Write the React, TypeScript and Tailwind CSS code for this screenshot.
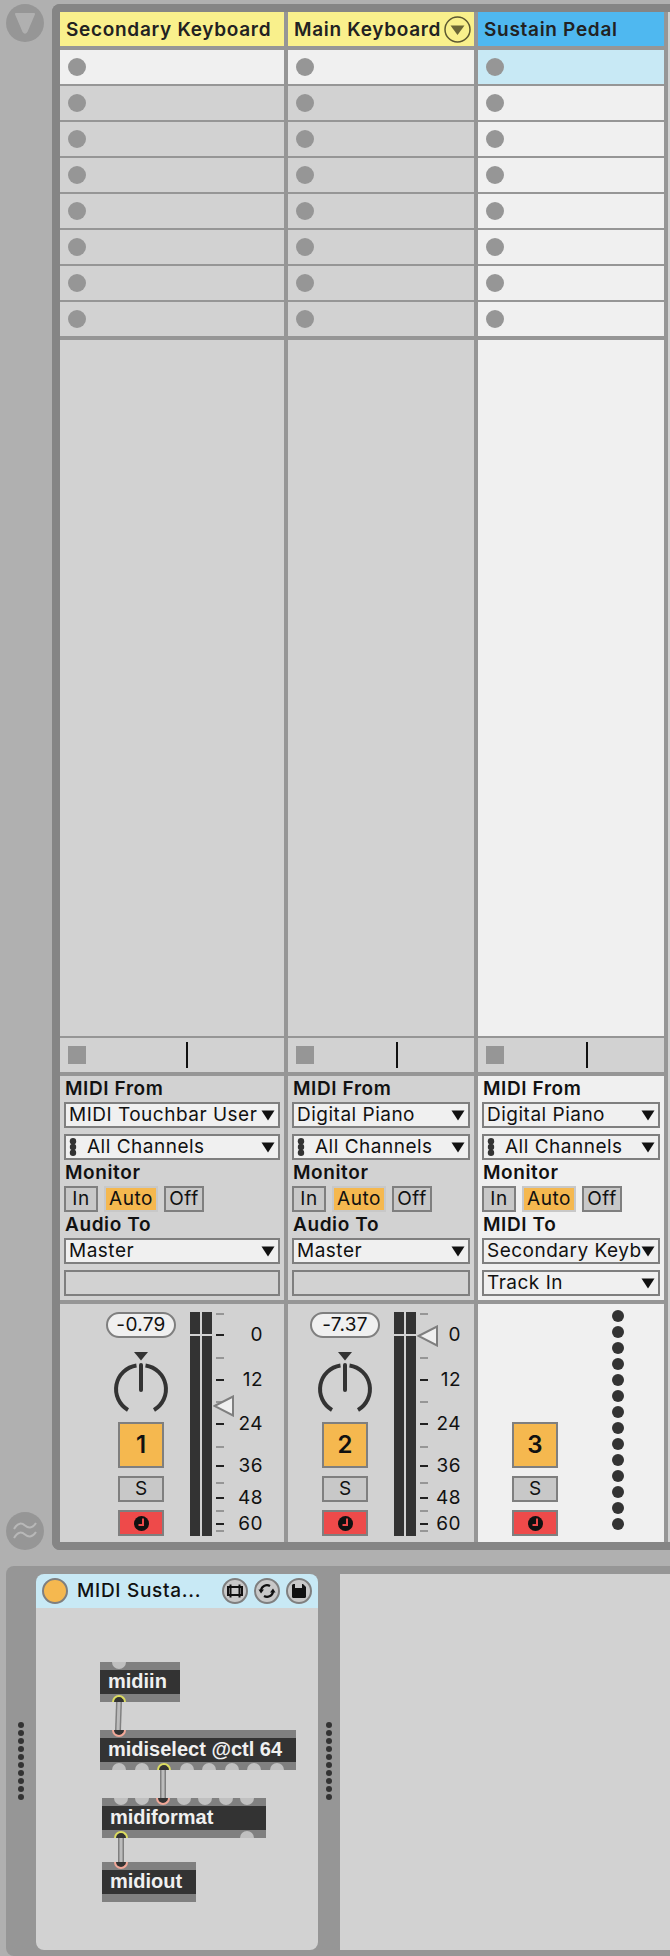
const ticks = [
  { y: 1, major: false },
  { y: 22, major: true, label: "0" },
  { y: 45, major: false },
  { y: 67, major: true, label: "12" },
  { y: 89, major: false },
  { y: 111, major: true, label: "24" },
  { y: 134, major: false },
  { y: 153, major: true, label: "36" },
  { y: 170, major: false },
  { y: 185, major: true, label: "48" },
  { y: 198, major: false },
  { y: 211, major: true, label: "60" },
  { y: 218, major: false },
];

function Arrow() {
  return (
    <svg width="14" height="11" viewBox="0 0 14 11" className="shrink-0">
      <path d="M0.5 0.5H13.5L7 10.5Z" fill="#111" />
    </svg>
  );
}

function Dropdown({ label, channels }: { label: string; channels?: boolean }) {
  return (
    <div className="h-[26px] border-2 border-[#7f7f7f] bg-[#f0f0f0] flex items-center pl-[3px] pr-[3px] text-[19px] tracking-[0.5px] text-[#111]">
      {channels && (
        <svg width="8" height="18" viewBox="0 0 8 18" className="shrink-0 mr-[10px]">
          <circle cx="4" cy="3.2" r="3.2" fill="#333" />
          <circle cx="4" cy="9" r="3.2" fill="#333" />
          <circle cx="4" cy="14.8" r="3.2" fill="#333" />
        </svg>
      )}
      <span className="flex-1 overflow-hidden whitespace-nowrap">{label}</span>
      <Arrow />
    </div>
  );
}

function Label({ children }: { children: string }) {
  return <div className="h-[26px] leading-[26px] pl-px text-[19px] font-semibold tracking-[0.6px] text-[#111]">{children}</div>;
}

function Monitor() {
  return (
    <div className="flex gap-[6px] h-[26px] text-[19px] tracking-[0.5px] text-[#111]">
      <div className="w-[34px] border-2 border-[#7f7f7f] bg-[#c8c8c8] flex items-center justify-center">In</div>
      <div className="w-[54px] border-2 border-[#c8c8c8] bg-[#f5b84f] flex items-center justify-center">Auto</div>
      <div className="w-[40px] border-2 border-[#7f7f7f] bg-[#c8c8c8] flex items-center justify-center">Off</div>
    </div>
  );
}

function Knob() {
  return (
    <svg width="60" height="64" viewBox="0 0 60 64" className="block">
      <path d="M23 0H37L30 8.5Z" fill="#333" />
      <path d="M25.5 13.5A24 24 0 0 0 17 58" fill="none" stroke="#333" strokeWidth="4" />
      <path d="M34.5 13.5A24 24 0 0 1 43 58" fill="none" stroke="#333" strokeWidth="4" />
      <path d="M30 13V38" fill="none" stroke="#333" strokeWidth="4" strokeLinecap="round" />
    </svg>
  );
}

function Fader({ y }: { y: number }) {
  return (
    <svg width="22" height="22" viewBox="0 0 22 22" className="absolute left-[23px]" style={{ top: y }}>
      <path d="M1.5 11L20 1.5V20.5Z" fill="#f0f0f0" stroke="#7f7f7f" strokeWidth="2" />
    </svg>
  );
}

function Meter({ fader, labelRight }: { fader: number; labelRight: number }) {
  return (
    <div className="relative w-[73px] h-[224px] mt-[8px] flex gap-[2px]">
      <div className="w-[10px] h-full bg-[#333] relative">
        <div className="absolute top-[22px] left-0 w-[22px] h-[2px] bg-[#d2d2d2]" />
      </div>
      <div className="w-[10px] h-full bg-[#333]" />
      {ticks.map((t) => (
        <div key={t.y}>
          <div
            className={t.major ? "absolute left-[26px] w-[8px] h-[2px] bg-[#222]" : "absolute left-[26px] w-[8px] h-[2px] bg-[#969696]"}
            style={{ top: t.y }}
          />
          {t.label && (
            <span
              className="absolute text-[19px] leading-[20px] tracking-[0.5px] text-[#111] text-right"
              style={{ top: t.y - 9, right: labelRight }}
            >
              {t.label}
            </span>
          )}
        </div>
      ))}
      <Fader y={fader} />
    </div>
  );
}

function Controls({ value, num }: { value?: string; num: string }) {
  return (
    <div className="w-[70px] h-full flex flex-col items-center pt-[8px]">
      <div className="h-[26px] w-[70px] shrink-0">
        {value && (
          <div className="h-[26px] w-[70px] rounded-full border-2 border-[#7f7f7f] bg-[#f0f0f0] flex items-center justify-center text-[19px] tracking-[0.3px] text-[#111]">
            {value}
          </div>
        )}
      </div>
      <div className="h-[64px] mt-[14px] shrink-0">{value && <Knob />}</div>
      <div className="w-[46px] h-[46px] mt-[6px] shrink-0 border-2 border-[#7f7f7f] bg-[#f5b84f] flex items-center justify-center text-[24px] font-semibold text-[#111]">
        {num}
      </div>
      <div className="w-[46px] h-[26px] mt-[8px] shrink-0 border-2 border-[#7f7f7f] bg-[#c8c8c8] flex items-center justify-center text-[19px] text-[#111]">
        S
      </div>
      <div className="w-[46px] h-[26px] mt-[8px] shrink-0 border-2 border-[#7f7f7f] bg-[#ee4a4a] flex items-center justify-center">
        <svg width="15" height="15" viewBox="0 0 15 15">
          <circle cx="7.5" cy="7.5" r="7.5" fill="#111" />
          <path d="M9 2.5V9H4.5" fill="none" stroke="#ee4a4a" strokeWidth="2" />
        </svg>
      </div>
    </div>
  );
}

type TrackProps = {
  name: string;
  width: string;
  header: string;
  active?: boolean;
  fold?: boolean;
  tickGap: string;
  mixerPad: string;
  value?: string;
  num: string;
  from: string;
  to: string;
  to2?: string;
  fader?: number;
  labelRight?: number;
};

function Track(p: TrackProps) {
  const off = p.active ? "bg-[#f0f0f0]" : "bg-[#d2d2d2]";
  return (
    <div className={"flex flex-col shrink-0 " + p.width}>
      <div className={"relative h-[34px] leading-[35px] pl-[6px] text-[19px] font-semibold tracking-[0.7px] text-[#222] whitespace-nowrap " + p.header}>
        {p.name}
        {p.fold && (
          <svg width="27" height="27" viewBox="0 0 27 27" className="absolute right-[3.5px] top-[3.5px]">
            <circle cx="13.5" cy="13.5" r="12.5" fill="none" stroke="#5c5830" strokeWidth="1.5" />
            <path d="M6.5 9.5H20.5L13.5 19Z" fill="#6b6636" />
          </svg>
        )}
      </div>
      <div className="mt-[4px] flex flex-col gap-[2px]">
        {[0, 1, 2, 3, 4, 5, 6, 7].map((i) => (
          <div key={i} className={i === 0 ? (p.active ? "h-[34px] bg-[#c8e9f5] flex items-center pl-[8px]" : "h-[34px] bg-[#f0f0f0] flex items-center pl-[8px]") : "h-[34px] flex items-center pl-[8px] " + off}>
            <div className="w-[18px] h-[18px] rounded-full bg-[#969696]" />
          </div>
        ))}
      </div>
      <div className={"mt-[4px] flex-1 " + off} />
      <div className="mt-[2px] h-[34px] bg-[#d2d2d2] flex items-center pl-[8px]">
        <div className="w-[18px] h-[18px] bg-[#969696]" />
        <div className={"w-[2px] h-[26px] bg-[#111] " + p.tickGap} />
      </div>
      <div className={"mt-[4px] h-[224px] px-[4px] " + off}>
        <Label>MIDI From</Label>
        <Dropdown label={p.from} />
        <div className="mt-[6px]">
          <Dropdown label="All Channels" channels />
        </div>
        <Label>Monitor</Label>
        <Monitor />
        <Label>{p.to}</Label>
        <Dropdown label={p.to2 ? "Secondary Keyboard" : "Master"} />
        <div className="mt-[6px]">
          {p.to2 ? (
            <Dropdown label={p.to2} />
          ) : (
            <div className="h-[26px] border-2 border-[#7f7f7f] bg-[#d2d2d2]" />
          )}
        </div>
      </div>
      <div className={"mt-[4px] h-[238px] flex " + off + " " + p.mixerPad}>
        <Controls value={p.value} num={p.num} />
        {p.fader !== undefined ? (
          <div className="ml-[14px]">
            <Meter fader={p.fader} labelRight={p.labelRight ?? 0} />
          </div>
        ) : (
          <div className="ml-[42px] pt-[6px] flex flex-col gap-[4px]">
            {Array.from({ length: 14 }).map((_, i) => (
              <div key={i} className="w-[12px] h-[12px] rounded-full bg-[#333]" />
            ))}
          </div>
        )}
      </div>
    </div>
  );
}

function Handle({ width }: { width: string }) {
  return (
    <div className={"shrink-0 flex flex-col items-center pt-[148px] gap-[2px] " + width}>
      {Array.from({ length: 10 }).map((_, i) => (
        <div key={i} className="w-[6px] h-[6px] rounded-full bg-[#333]" />
      ))}
    </div>
  );
}

function RoundIcon({ children }: { children: React.ReactNode }) {
  return (
    <div className="w-[26px] h-[26px] rounded-full border-2 border-[#7f7f7f] bg-[#c8c8c8] flex items-center justify-center shrink-0">
      {children}
    </div>
  );
}

const nodes = [
  { name: "midiin", left: 64, top: 54, w: 80, inlets: [19], outlets: [19], activeIn: -1, activeOut: 0 },
  {
    name: "midiselect @ctl 64",
    left: 64,
    top: 122,
    w: 196,
    inlets: [19],
    outlets: [19, 41.7, 64.3, 86.7, 109.3, 132, 154.3, 177],
    activeIn: 0,
    activeOut: 2,
  },
  {
    name: "midiformat",
    left: 66,
    top: 190,
    w: 164,
    inlets: [19, 40, 61, 82, 103, 124, 145],
    outlets: [19, 145],
    activeIn: 2,
    activeOut: 0,
  },
  { name: "midiout", left: 66, top: 254, w: 94, inlets: [19], outlets: [], activeIn: 0, activeOut: -1 },
];

function MaxObject({ n }: { n: (typeof nodes)[number] }) {
  return (
    <div className="absolute h-[40px] bg-[#808080]" style={{ left: n.left, top: n.top, width: n.w }}>
      <div className="absolute left-0 right-0 top-[8px] h-[24px] bg-[#333] pl-[8px] leading-[23px] text-[20px] font-bold text-[#f0f0f0] whitespace-nowrap font-['Liberation_Sans',sans-serif]">
        {n.name}
      </div>
      {n.inlets.map((x, i) =>
        i === n.activeIn ? (
          <div
            key={i}
            className="absolute top-0 w-[14px] h-[7px] rounded-b-full bg-[#333] border-2 border-t-0 border-[#f2a898]"
            style={{ left: x - 7 }}
          />
        ) : (
          <div key={i} className="absolute top-0 w-[14px] h-[7px] rounded-b-full bg-[#c0c0c0]" style={{ left: x - 7 }} />
        ),
      )}
      {n.outlets.map((x, i) =>
        i === n.activeOut ? (
          <div
            key={i}
            className="absolute bottom-0 w-[14px] h-[7px] rounded-t-full bg-[#333] border-2 border-b-0 border-[#dcdc60]"
            style={{ left: x - 7 }}
          />
        ) : (
          <div key={i} className="absolute bottom-0 w-[14px] h-[7px] rounded-t-full bg-[#c0c0c0]" style={{ left: x - 7 }} />
        ),
      )}
    </div>
  );
}

function Cord({ x1, y1, x2, y2 }: { x1: number; y1: number; x2: number; y2: number }) {
  return (
    <g>
      <line x1={x1} y1={y1} x2={x2} y2={y2} stroke="#808080" strokeWidth="6" />
      <line x1={x1} y1={y1} x2={x2} y2={y2} stroke="#bcbcbc" strokeWidth="3" />
    </g>
  );
}

export default function App() {
  return (
    <div className="w-[670px] h-[1956px] bg-[#b0b0b0] overflow-hidden flex flex-col font-['Inter',sans-serif]">
      <div className="flex h-[1550px] shrink-0">
        <div className="w-[52px] shrink-0 flex flex-col justify-between items-start pl-[6px] pt-[4px]">
          <div className="w-[38px] h-[38px] rounded-full bg-[#969696] flex items-center justify-center">
            <svg width="24" height="24" viewBox="0 0 24 24">
              <path d="M3 3H21L13.5 20.5Q12 23 10.5 20.5Z" fill="#b0b0b0" stroke="#b0b0b0" strokeLinejoin="round" strokeWidth="2" />
            </svg>
          </div>
          <div className="w-[38px] h-[38px] rounded-full bg-[#969696] flex items-center justify-center">
            <svg width="26" height="22" viewBox="0 0 26 22">
              <path d="M2 9C6 2 10 3 13 5.5S20 9 24 3" fill="none" stroke="#b8b8b8" strokeWidth="2" />
              <path d="M2 18C6 11 10 12 13 14.5S20 18 24 12" fill="none" stroke="#b8b8b8" strokeWidth="2" />
            </svg>
          </div>
        </div>
        <div className="flex-1 mt-[4px] border-y-8 border-l-8 border-[#858585] rounded-l-[8px] bg-[#969696] flex gap-[4px]">
          <Track
            name="Secondary Keyboard"
            width="w-[224px]"
            header="bg-[#f9f08c]"
            tickGap="ml-[100px]"
            mixerPad="pl-[46px]"
            value="-0.79"
            num="1"
            from="MIDI Touchbar User"
            to="Audio To"
            fader={83}
            labelRight={0}
          />
          <Track
            name="Main Keyboard"
            width="w-[186px]"
            header="bg-[#f9f08c]"
            fold
            tickGap="ml-[82px]"
            mixerPad="pl-[22px]"
            value="-7.37"
            num="2"
            from="Digital Piano"
            to="Audio To"
            fader={13}
            labelRight={6}
          />
          <Track
            name="Sustain Pedal"
            width="w-[186px]"
            header="bg-[#4fb8f0]"
            active
            tickGap="ml-[82px]"
            mixerPad="pl-[22px]"
            num="3"
            from="Digital Piano"
            to="MIDI To"
            to2="Track In"
          />
          <div className="flex-1 bg-[#d2d2d2]" />
        </div>
      </div>

      <div className="mt-[16px] ml-[6px] h-[390px] bg-[#969696] rounded-tl-[8px] rounded-bl-[8px] pt-[8px] pb-[6px] flex">
        <Handle width="w-[30px]" />
        <div className="w-[282px] shrink-0 rounded-[8px] overflow-hidden flex flex-col">
          <div className="h-[34px] bg-[#c8e9f5] flex items-center pl-[6px] pr-[6px]">
            <div className="w-[26px] h-[26px] rounded-full border-2 border-[#7f7f7f] bg-[#f5b84f] shrink-0" />
            <span className="ml-[9px] flex-1 text-[19px] font-medium tracking-[0.7px] text-[#111] whitespace-nowrap">MIDI Susta...</span>
            <div className="flex gap-[6px]">
              <RoundIcon>
                <svg width="18" height="18" viewBox="0 0 18 18">
                  <rect x="2" y="5" width="14" height="8" fill="none" stroke="#111" strokeWidth="2" />
                  <path d="M4.5 2.5V15.5M13.5 2.5V15.5" stroke="#111" strokeWidth="2" />
                </svg>
              </RoundIcon>
              <RoundIcon>
                <svg width="18" height="18" viewBox="0 0 18 18">
                  <path d="M3 8A6 6 0 0 1 12 4" fill="none" stroke="#111" strokeWidth="2.2" />
                  <path d="M15 10A6 6 0 0 1 6 14" fill="none" stroke="#111" strokeWidth="2.2" />
                  <path d="M0.5 7.5H6L3 11.5Z" fill="#111" />
                  <path d="M17.5 10.5H12L15 6.5Z" fill="#111" />
                </svg>
              </RoundIcon>
              <RoundIcon>
                <svg width="16" height="16" viewBox="0 0 16 16">
                  <path d="M1 2.5Q1 1 2.5 1H12L15 4V13.5Q15 15 13.5 15H2.5Q1 15 1 13.5Z" fill="#111" />
                  <rect x="4" y="1" width="7" height="4" fill="#c8c8c8" />
                </svg>
              </RoundIcon>
            </div>
          </div>
          <div className="relative flex-1 bg-[#d2d2d2]">
            <svg width="282" height="342" viewBox="0 0 282 342" className="absolute left-0 top-0">
              <Cord x1={83} y1={94} x2={82} y2={122} />
              <Cord x1={127} y1={162} x2={127} y2={190} />
              <Cord x1={85} y1={230} x2={85} y2={254} />
            </svg>
            {nodes.map((n) => (
              <MaxObject key={n.name} n={n} />
            ))}
          </div>
        </div>
        <Handle width="w-[22px]" />
        <div className="flex-1 bg-[#d2d2d2]" />
      </div>
    </div>
  );
}
